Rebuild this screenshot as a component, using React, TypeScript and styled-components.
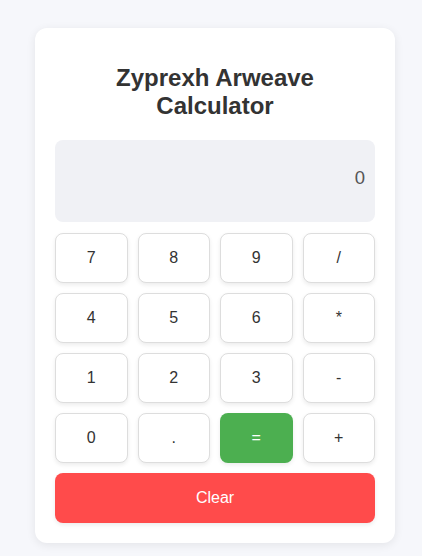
import React, { useState } from "react";
import styled, { createGlobalStyle } from "styled-components";

const Global = createGlobalStyle`
  html, body { margin: 0; padding: 0; background: #f6f7fb; }
  body { font-family: "Liberation Sans", Arial, sans-serif; }
`;

const Page = styled.div`
  width: 422px;
  min-height: 556px;
  box-sizing: border-box;
  padding: 28px 0 0 8px;
  display: flex;
  justify-content: center;
  align-items: flex-start;
`;

const Card = styled.div`
  width: 360px;
  box-sizing: border-box;
  background: #ffffff;
  border-radius: 12px;
  padding: 20px;
  box-shadow: 0 2px 10px rgba(0, 0, 0, 0.08);
`;

const Title = styled.h1`
  margin: 16px 0 21px;
  font-size: 24px;
  font-weight: 700;
  line-height: 27.6px;
  color: #333333;
  text-align: center;
`;

const Display = styled.div`
  height: 82px;
  box-sizing: border-box;
  background: #f0f1f5;
  border-radius: 8px;
  padding: 0 10px 6px;
  display: flex;
  align-items: center;
  justify-content: flex-end;
  font-size: 18.5px;
  color: #555555;
  margin-bottom: 11px;
`;

const Keys = styled.div`
  display: grid;
  grid-template-columns: repeat(4, 1fr);
  gap: 10px;
`;

const Key = styled.button<{ $variant?: "equals" | "clear" }>`
  height: 50px;
  border-radius: 8px;
  font-family: inherit;
  font-size: 16px;
  cursor: pointer;
  border: 1px solid ${(p) => (p.$variant ? "transparent" : "#dddddd")};
  background: ${(p) =>
    p.$variant === "equals" ? "#4caf50" : p.$variant === "clear" ? "#ff4b4b" : "#ffffff"};
  color: ${(p) => (p.$variant ? "#ffffff" : "#333333")};
  box-shadow: 0 2px 4px rgba(0, 0, 0, 0.08);
  grid-column: ${(p) => (p.$variant === "clear" ? "1 / -1" : "auto")};
  padding: 0;
`;

const keys = ["7", "8", "9", "/", "4", "5", "6", "*", "1", "2", "3", "-", "0", ".", "=", "+"];

export default function App() {
  const [value] = useState("0");
  return (
    <>
      <Global />
      <Page>
        <Card>
          <Title>
            Zyprexh Arweave
            <br />
            Calculator
          </Title>
          <Display>{value}</Display>
          <Keys>
            {keys.map((k) => (
              <Key key={k} $variant={k === "=" ? "equals" : undefined}>
                {k}
              </Key>
            ))}
            <Key $variant="clear">Clear</Key>
          </Keys>
        </Card>
      </Page>
    </>
  );
}
